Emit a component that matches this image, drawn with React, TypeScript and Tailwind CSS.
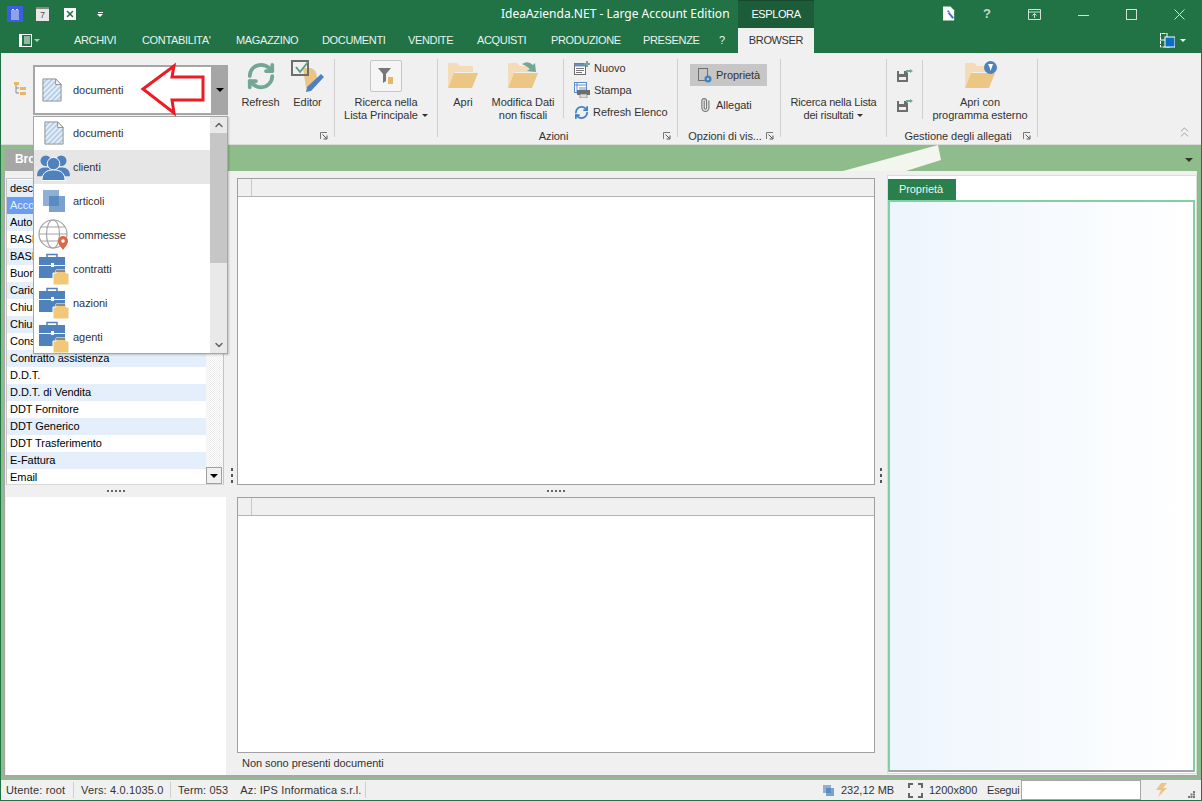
import { ChevronUp, ChevronDown, Paperclip, RefreshCw, X } from 'lucide-react';

const Caret = ({ className = 'border-t-white' }: { className?: string }) => (
  <span className={`inline-block w-0 h-0 border-x-[3px] border-x-transparent border-t-[3px] ${className}`} />
);

const DocIcon = () => (
  <svg width={20} height={24} viewBox="0 0 22 26" preserveAspectRatio="none">
    <defs>
      <pattern id="hatch" width="4" height="4" patternUnits="userSpaceOnUse" patternTransform="rotate(45)">
        <rect width="4" height="4" fill="#e6eef8" />
        <rect width="2" height="4" fill="#b5cde6" />
      </pattern>
    </defs>
    <path d="M1 1h14l6 6v18H1z" fill="url(#hatch)" stroke="#8a8a8a" />
    <path d="M15 1v6h6z" fill="#fff" stroke="#8a8a8a" />
  </svg>
);

const UsersIcon = () => (
  <svg width="33" height="27" viewBox="0 0 34 28" fill="#4f81bd">
    <circle cx="9" cy="7" r="5.500" />
    <circle cx="25" cy="7" r="5.500" />
    <path d="M0 21c1-6 5-7 9-7s8 2 8 7v2H0z" />
    <path d="M17 21c0-5 4-7 8-7s8 1 9 7v2H17z" />
    <circle cx="17" cy="10" r="6.500" stroke="#fff" />
    <path d="M5 27.500c0-8 5-11 12-11s12 3 12 11z" stroke="#fff" />
  </svg>
);

const SquaresIcon = ({ s = 22 }: { s?: number }) => (
  <svg width={s} height={s} viewBox="0 0 22 22">
    <rect x="0" y="0" width="16" height="16" fill="#8fb0d6" />
    <rect x="6" y="6" width="16" height="16" fill="#7ba2cf" />
    <rect x="6" y="6" width="10" height="10" fill="#5b8bc2" />
  </svg>
);

const GlobeIcon = () => (
  <svg width="32" height="32" viewBox="0 0 32 32">
    <g fill="none" stroke="#a3a3a3" strokeWidth="1.2">
      <circle cx="15" cy="15" r="14" />
      <ellipse cx="15" cy="15" rx="6.5" ry="14" />
      <path d="M1 15h28M3 8h24M3 22h24" />
    </g>
    <path d="M25 31c-3-4-5-6-5-9a5 5 0 0 1 10 0c0 3-2 5-5 9z" fill="#d9694a" />
    <circle cx="25" cy="22" r="1.8" fill="#fff" />
  </svg>
);

const CaseIcon = () => (
  <svg width="32" height="32" viewBox="0 0 32 32">
    <path d="M9 4V1.500h10V4" fill="none" stroke="#4f81bd" strokeWidth="1.500" />
    <rect x="1" y="4" width="26" height="8" fill="#4f81bd" />
    <rect x="1" y="13" width="26" height="12" fill="#4f81bd" />
    <rect x="13" y="10" width="3" height="4" fill="#fff" />
    <path d="M15 20h3v-3h10v3h3v12H15z" fill="#f0c878" stroke="#fff" />
    <path d="M18 17h9v2h-9z" fill="#8a8a8a" />
  </svg>
);

const Folder = ({ s = 30 }: { s?: number }) => (
  <svg width={s} height={s * 0.87} viewBox="0 0 30 26">
    <path d="M0 0h9l3 3h13v6H7L0 24z" fill="#f5dcb8" />
    <path d="M6 10h24l-6 15H0z" fill="#ebc684" />
  </svg>
);

const TreeIcon = () => (
  <svg width="12" height="14" viewBox="0 0 12 14">
    <path d="M2 2v9h3M2 6h3" fill="none" stroke="#8a8a8a" />
    <rect x="0" y="0" width="5" height="3" fill="#e9b566" />
    <rect x="6" y="5" width="6" height="3" fill="#e9b566" />
    <rect x="6" y="10" width="6" height="3" fill="#e9b566" />
  </svg>
);

const FloppyIcon = () => (
  <svg width="16" height="13" viewBox="0 0 16 13">
    <path d="M0 2h9l2 2v9H0z" fill="#6e6e6e" />
    <rect x="2" y="2" width="5" height="3" fill="#f0f0f0" />
    <rect x="2" y="8" width="7" height="3" fill="#f0f0f0" />
    <path d="M9 1h4V0l3 2-3 2V3H9z" fill="#6fa893" />
  </svg>
);

const Launcher = () => (
  <svg width="8" height="8" viewBox="0 0 8 8" className="shrink-0">
    <path d="M.5 7V.5H7" fill="none" stroke="#777" />
    <path d="M2.500 2.500l4 4M3.500 7H7V3.500" fill="none" stroke="#555" />
  </svg>
);

const BigBtn = ({ icon, lines, caret, className = '' }: { icon: React.ReactNode; lines: string[]; caret?: boolean; className?: string }) => (
  <div className={`flex flex-col items-center pt-[7px] ${className}`}>
    <div className="h-[32px] flex items-center justify-center">{icon}</div>
    <div className="mt-[4px] leading-[13px] text-center whitespace-nowrap">
      {lines.map((l, i) => (
        <div key={l}>
          {l}
          {caret && i === lines.length - 1 && <Caret className="border-t-[#333] ml-[4px] mb-[2px]" />}
        </div>
      ))}
    </div>
  </div>
);

const Group = ({ className, label, launcher = true, children }: { className: string; label?: string; launcher?: boolean; children: React.ReactNode }) => (
  <>
    <div className={`flex flex-col shrink-0 ${className}`}>
      <div className="flex-1 flex min-h-0">{children}</div>
      <div className="h-[18px] flex items-center justify-end pr-[6px] pt-[2px] gap-[2px]">
        {label && <span className="flex-1 text-center whitespace-nowrap pl-[8px]">{label}</span>}
        {launcher && <Launcher />}
      </div>
    </div>
    <div className="w-px bg-[#cfcfcf] mt-[6px] mb-[7px] shrink-0" />
  </>
);

const TABS: [string, string][] = [
  ['ARCHIVI', 'w-[68px]'],
  ["CONTABILITA'", 'w-[94px]'],
  ['MAGAZZINO', 'w-[86px]'],
  ['DOCUMENTI', 'w-[86px]'],
  ['VENDITE', 'w-[69px]'],
  ['ACQUISTI', 'w-[74px]'],
  ['PRODUZIONE', 'w-[92px]'],
  ['PRESENZE', 'w-[76px]'],
  ['?', 'w-[19px]'],
];

const LIST = ['Auto', 'BASI', 'BASI', 'Buon', 'Caric', 'Chius', 'Chius', 'Cons', 'Contratto assistenza', 'D.D.T.', 'D.D.T. di Vendita', 'DDT Fornitore', 'DDT Generico', 'DDT Trasferimento', 'E-Fattura', 'Email'];

const POPUP: [string, React.ReactNode][] = [
  ['documenti', <DocIcon key="d" />],
  ['clienti', <UsersIcon key="u" />],
  ['articoli', <SquaresIcon key="s" />],
  ['commesse', <GlobeIcon key="g" />],
  ['contratti', <CaseIcon key="c1" />],
  ['nazioni', <CaseIcon key="c2" />],
  ['agenti', <CaseIcon key="c3" />],
];

const GridBox = ({ className }: { className: string }) => (
  <div className={`bg-white border border-[#a0a0a0] ${className}`}>
    <div className="h-[18px] bg-[#f0f0f0] border-b border-[#b4b4b4] flex">
      <div className="w-[14px] border-r border-[#c8c8c8]" />
    </div>
  </div>
);

const HDots = () => (
  <div className="flex gap-[2px]">
    {[0, 1, 2, 3, 4].map((i) => (
      <span key={i} className="w-[2px] h-[2px] bg-[#666]" />
    ))}
  </div>
);

const VDots = () => (
  <div className="flex flex-col gap-[3px]">
    {[0, 1, 2].map((i) => (
      <span key={i} className="w-[2px] h-[3px] bg-[#555]" />
    ))}
  </div>
);

export default function App() {
  return (
    <div className="relative w-[1202px] h-[801px] overflow-hidden bg-[#217346] flex flex-col text-[11px] tracking-[-0.05px] text-[#333] font-['Liberation_Sans',sans-serif]">
      {/* title bar */}
      <div className="h-[28px] flex items-center shrink-0 text-white">
        <div className="w-[501px] flex items-center">
          <div className="ml-[7px] w-[16px] h-[16px] bg-[#3a5fd9] flex items-center justify-center">
            <svg width="10" height="12" viewBox="0 0 10 12" fill="none" stroke="#dfe6fb">
              <path d="M2 12V2q1-2 2 0v10M6 12V2q1-2 2 0v10" />
            </svg>
          </div>
          <div className="ml-[13px] w-[13px] h-[14px] bg-[#e8e8e8] border-t-2 border-[#888] text-[#555] text-[9px] leading-[12px] text-center">7</div>
          <div className="ml-[15px] w-[12px] h-[12px] bg-white flex items-center justify-center">
            <X size={10} strokeWidth={3.5} className="text-[#217346]" />
          </div>
          <div className="ml-[21px] flex flex-col items-center gap-[1px]">
            <span className="w-[5px] h-px bg-white" />
            <Caret />
          </div>
        </div>
        <div className="w-[237px] text-[12px] tracking-normal font-['Noto_Sans',sans-serif] whitespace-nowrap">IdeaAzienda.NET - Large Account Edition</div>
        <div className="w-[76px] h-full bg-[#1c5c39] border-t border-[#154a2d] tracking-[-0.4px] flex items-center justify-center">ESPLORA</div>
        <div className="flex-1 flex items-center text-[#d5dfd9]">
          <div className="ml-[129px] w-[13px] flex justify-center">
            <svg width="14" height="16" viewBox="0 0 14 16">
              <path d="M0 0h8l4 4v11H0z" fill="#fff" />
              <path d="M5 7l5 6 2-1-5-6c0-2-2-2-3-1l2 1v1z" fill="#3a78c2" />
            </svg>
          </div>
          <div className="ml-[25px] w-[12px] text-center text-[13px] font-bold text-[#c9d6cf]">?</div>
          <div className="ml-[35px] w-[13px] flex justify-center">
            <svg width="13" height="11" viewBox="0 0 13 11" fill="none" stroke="#d5dfd9">
              <path d="M.5.5h12v10H.5zM.5 3h12M6.500 9V4.500M4.500 6.500l2-2 2 2" />
            </svg>
          </div>
          <svg width="11" height="11" viewBox="0 0 11 11" className="ml-[37px]" stroke="#d5dfd9">
            <path d="M0 6.500h11" />
          </svg>
          <svg width="11" height="11" viewBox="0 0 11 11" className="ml-[37px]" fill="none" stroke="#d5dfd9">
            <rect x=".5" y=".5" width="10" height="10" />
          </svg>
          <svg width="11" height="11" viewBox="0 0 11 11" className="ml-[37px]" fill="none" stroke="#d5dfd9">
            <path d="M.5.5l10 10M10.500.5l-10 10" />
          </svg>
        </div>
      </div>

      {/* tabs */}
      <div className="h-[25px] flex items-center shrink-0 text-[#eaf2ed] tracking-[-0.35px]">
        <div className="w-[74px] flex items-center pl-[19px] gap-[2px]">
          <svg width="13" height="13" viewBox="0 0 13 13">
            <rect x=".5" y=".5" width="12" height="12" fill="none" stroke="#fff" />
            <path d="M1 0h2v13H1z" fill="#fff" />
            <path d="M5 3h6M5 5h6M5 7h6M5 9h6" stroke="#fff" />
          </svg>
          <Caret className="border-t-[#b5c9bd]" />
        </div>
        <div className="w-[664px] flex whitespace-nowrap">
          {TABS.map(([t, w]) => (
            <span key={t} className={w}>{t}</span>
          ))}
        </div>
        <div className="w-[76px] h-full bg-[#f0f0f0] text-[#333] flex items-center justify-center">BROWSER</div>
        <div className="flex-1 flex items-center justify-end pr-[16px] gap-[5px]">
          <svg width="15" height="15" viewBox="0 0 15 15">
            <path d="M5 .5H.5V14H10v-4" fill="none" stroke="#fff" strokeDasharray="3 1" />
            <rect x="0" y="0" width="7" height="7" fill="none" stroke="#fff" />
            <rect x="5" y="4" width="10" height="10" fill="#0a6fc2" stroke="#fff" />
          </svg>
          <Caret />
        </div>
      </div>

      <div className="mx-px flex-1 flex flex-col min-h-0 bg-[#8fbc8b]">
        {/* ribbon */}
        <div className="relative h-[92px] bg-[#f0f0f0] flex shrink-0 border-b border-[#dcdcdc]">
          <Group className="w-[333px]">
            <div className="w-[32px] pt-[29px] pl-[13px]">
              <TreeIcon />
            </div>
            <div className="relative mt-[12px] w-[195px] h-[50px] z-20 bg-white border-2 border-[#a6a6a6] flex items-center">
              <div className="ml-[7px]"><DocIcon /></div>
              <span className="ml-[11px] text-[#333]">documenti</span>
              <div className="absolute -right-[2px] -top-[2px] -bottom-[2px] w-[17px] bg-[#a6a6a6] flex items-center justify-center">
                <Caret className="border-t-black border-x-[4px] border-t-[4px]" />
              </div>
            </div>
            <BigBtn className="ml-[9px] w-[47px]" icon={<RefreshCw size={30} strokeWidth={3} className="text-[#72a795]" />} lines={['Refresh']} />
            <BigBtn
              className="w-[47px]"
              icon={
                <svg width="33" height="32" viewBox="0 0 33 32">
                  <path d="M12 8h8q6 2 6 10l-8 10h-3z" fill="#ecc484" />
                  <rect x="1" y="1" width="16" height="14" fill="none" stroke="#6e6e6e" strokeWidth="2" />
                  <path d="M5 7l4 5 8-10" fill="none" stroke="#5e9c86" strokeWidth="2" />
                  <path d="M30 14l3 3-13 14-5 1 1-5z" fill="#4f81bd" />
                </svg>
              }
              lines={['Editor']}
            />
          </Group>
          <Group className="w-[102px]" launcher={false}>
            <BigBtn
              className="w-full"
              icon={
                <div className="w-[32px] h-[32px] bg-[#f5f5f5] border border-[#c6c6c6] rounded-[2px] flex items-center justify-center">
                  <svg width="16" height="18" viewBox="0 0 16 18">
                    <path d="M0 1h13L8 7v7L5 16V7z" fill="#777" />
                    <rect x="10" y="10" width="5" height="7" fill="#e9b566" />
                  </svg>
                </div>
              }
              lines={['Ricerca nella', 'Lista Principale']}
              caret
            />
          </Group>
          <Group className="w-[239px]" label="Azioni">
            <BigBtn className="w-[50px]" icon={<Folder />} lines={['Apri']} />
            <BigBtn
              className="w-[70px] mr-[5px]"
              icon={
                <div className="relative">
                  <Folder />
                  <svg width="18" height="14" viewBox="0 0 18 14" className="absolute -right-[2px] -top-[3px]">
                    <path d="M0 4q6-4 11 1l2-2 1 9-9-1 3-2Q5 6 0 4z" fill="#6fa893" />
                  </svg>
                </div>
              }
              lines={['Modifica Dati', 'non fiscali']}
            />
            <div className="w-px bg-[#cfcfcf] mt-[6px] mb-[8px]" />
            <div className="flex flex-col pl-[10px] pt-[7px] gap-[6px]">
              <div className="h-[16px] flex items-center gap-[4px]">
                <svg width="16" height="14" viewBox="0 0 16 14">
                  <rect x=".5" y="2.500" width="11" height="11" fill="#fff" stroke="#6e6e6e" />
                  <path d="M.5 2.500h11v3H.5z" fill="#6e8eb5" />
                  <path d="M2 7.500h8M2 9.500h8M2 11.500h6" stroke="#777" />
                  <path d="M12 0h2v2h2v2h-2v2h-2V4h-2V2h2z" fill="#6fa893" />
                </svg>
                Nuovo
              </div>
              <div className="h-[16px] flex items-center gap-[4px]">
                <svg width="16" height="16" viewBox="0 0 16 16">
                  <rect x=".5" y=".5" width="12" height="10" fill="#fff" stroke="#5b8bc2" />
                  <path d="M.5 3h12M3 .5v10" stroke="#5b8bc2" />
                  <rect x="5" y="5" width="7" height="4" fill="#b9c8da" />
                  <rect x="3" y="8" width="13" height="5" fill="#6e6e6e" />
                  <rect x="6" y="12" width="7" height="4" fill="#dcdcdc" stroke="#6e6e6e" strokeWidth=".6" />
                </svg>
                Stampa
              </div>
              <div className="h-[16px] flex items-center gap-[4px]">
                <RefreshCw size={15} strokeWidth={2.800} className="text-[#3f82c4]" />
                <span>Refresh Elenco</span>
              </div>
            </div>
          </Group>
          <Group className="w-[102px]" label="Opzioni di vis...">
            <div className="flex flex-col pl-[12px] pt-[11px] gap-[8px]">
              <div className="w-[77px] h-[22px] bg-[#c6c6c6] flex items-center pl-[8px] gap-[4px]">
                <svg width="14" height="15" viewBox="0 0 14 15">
                  <rect x=".5" y=".5" width="9" height="12" fill="none" stroke="#6e6e6e" />
                  <circle cx="10" cy="11" r="3.500" fill="#3f82c4" />
                  <circle cx="10" cy="11" r="1.200" fill="#c6c6c6" />
                </svg>
                Proprietà
              </div>
              <div className="h-[22px] flex items-center pl-[8px] gap-[4px]">
                <Paperclip size={14} className="text-[#777] -rotate-45" />
                <span>Allegati</span>
              </div>
            </div>
          </Group>
          <Group className="w-[105px]" launcher={false}>
            <div className="w-full pt-[43px] leading-[13px] text-center whitespace-nowrap tracking-[-0.2px]">
              <div>Ricerca nella Lista</div>
              <div>
                dei risultati
                <Caret className="border-t-[#333] ml-[4px] mb-[2px]" />
              </div>
            </div>
          </Group>
          <Group className="w-[150px]" label="Gestione degli allegati">
            <div className="w-[35px] flex flex-col items-center pt-[16px] gap-[17px] pl-[1px]">
              <FloppyIcon />
              <FloppyIcon />
            </div>
            <div className="w-px bg-[#cfcfcf] mt-[7px] mb-[7px]" />
            <BigBtn
              className="w-[114px]"
              icon={
                <div className="relative">
                  <Folder />
                  <svg width="13" height="13" viewBox="0 0 13 13" className="absolute -right-[2px] -top-[2px]">
                    <circle cx="6.500" cy="6.500" r="6.500" fill="#4f81bd" />
                    <path d="M4 3h5L8 6 6.500 10 5.500 6z" fill="#fff" />
                  </svg>
                </div>
              }
              lines={['Apri con', 'programma esterno']}
            />
          </Group>
          <div className="flex-1 flex items-end justify-end pr-[10px] pb-[3px]">
            <div className="flex flex-col -space-y-[8px] text-[#777]">
              <ChevronUp size={13} strokeWidth={1.200} />
              <ChevronUp size={13} strokeWidth={1.200} />
            </div>
          </div>
        </div>

        {/* browser caption strip */}
        <div className="relative h-[26px] shrink-0 flex items-end pl-[4px]">
          <div className="w-[120px] h-[22px] bg-[#a6a6a6] text-white font-bold text-[12px] pl-[10px] leading-[20px]">Bro</div>
          <svg width="100" height="27" viewBox="0 0 100 27" className="absolute left-[842px] top-0 z-10">
            <path d="M95 0l3 15-35 11H0z" fill="#f3f5ef" />
          </svg>
          <div className="absolute right-[8px] top-[13px] flex">
            <Caret className="border-t-[#333] border-x-[4px] border-t-[4px]" />
          </div>
        </div>

        {/* workspace */}
        <div className="flex-1 min-h-0 mx-[3px] mb-[3px] bg-[#f0f0f0] border-x border-b-2 border-[#a6a6a6] flex pt-[7px]">
          <div className="w-[220px] shrink-0 ml-[1px] flex flex-col">
            <div className="relative h-[307px] mr-[2px] shrink-0 bg-white border border-[#c4c4c4] border-b-[#d8d8d8] pt-[1px] overflow-hidden">
              <div className="h-[17px] w-[199px] bg-[#e4effb] pl-[3px] text-black leading-[17px]">desc</div>
              <div className="h-[17px] w-[199px] bg-[#6b9cf0] pl-[3px] text-[#e8f0ff] leading-[17px]">Acco</div>
              {LIST.map((t, i) => (
                <div key={t + i} className={`h-[17px] w-[199px] pl-[3px] text-black leading-[17px] ${i % 2 === 0 ? 'bg-[#e4effb]' : 'bg-white'}`}>
                  {t}
                </div>
              ))}
              <div className="absolute right-0 top-0 bottom-0 w-[17px] bg-[repeating-conic-gradient(#ececec_0_25%,#ffffff_0_50%)] bg-[length:2px_2px] flex items-end">
                <div className="w-[16px] h-[17px] bg-[#f0f0f0] border border-[#a0a0a0] flex items-center justify-center">
                  <Caret className="border-t-black border-x-[4px] border-t-[4px]" />
                </div>
              </div>
            </div>
            <div className="h-[12px] shrink-0 flex items-center justify-center"><HDots /></div>
            <div className="flex-1 bg-white" />
          </div>
          <div className="w-[11px] shrink-0 flex flex-col pt-[290px] items-center"><VDots /></div>
          <div className="w-[638px] shrink-0 flex flex-col">
            <GridBox className="h-[307px] shrink-0" />
            <div className="h-[12px] shrink-0 flex items-center justify-center"><HDots /></div>
            <GridBox className="flex-1" />
            <div className="h-[22px] shrink-0 flex items-center pl-[5px] pb-[1px]">Non sono presenti documenti</div>
          </div>
          <div className="w-[12px] shrink-0 flex flex-col pt-[290px] items-center"><VDots /></div>
          <div className="flex-1 -mt-[3px] mb-[1px] bg-white border border-[#dcdcdc] flex flex-col pt-[3px] pr-px pb-px">
            <div className="w-[68px] h-[21px] bg-[#2a7f4f] text-[#eef6f1] flex items-center justify-center shrink-0 pr-[2px]">Proprietà</div>
            <div className="flex-1 border-2 border-[#7fd1a0] border-b-[#a6a6a6] bg-gradient-to-r from-[#edf5fd] to-white" />
          </div>
        </div>
      </div>

      {/* status bar */}
      <div className="h-[20px] mx-px mb-px bg-[#f0f0f0] flex items-center shrink-0 whitespace-nowrap tracking-[0.15px]">
        <span className="w-[73px] pl-[5px] border-r border-[#cfcfcf]">Utente: root</span>
        <span className="w-[97px] pl-[7px] border-r border-[#cfcfcf]">Vers: 4.0.1035.0</span>
        <span className="w-[195px] pl-[7px] border-r border-[#cfcfcf]">
          Term: 053<span className="ml-[12px]">Az: IPS Informatica s.r.l.</span>
        </span>
        <div className="ml-[457px]"><SquaresIcon s={11} /></div>
        <span className="ml-[7px] w-[58px] tracking-normal">232,12 MB</span>
        <svg width="15" height="15" viewBox="0 0 15 15" className="ml-[9px]" fill="none" stroke="#666" strokeWidth="2">
          <path d="M1 5V1h4M10 1h4v4M14 10v4h-4M5 14H1v-4" />
        </svg>
        <span className="ml-[6px] w-[58px] tracking-normal">1200x800</span>
        <span className="tracking-[-0.2px]">Esegui</span>
        <div className="ml-[2px] w-[120px] h-[20px] bg-white border border-[#a6a6a6]" />
        <svg width="11" height="14" viewBox="0 0 11 14" className="ml-[15px]">
          <path d="M5 0h6L7 5h4L2 14l3-7H0z" fill="#ecc484" />
        </svg>
        <svg width="7" height="7" viewBox="0 0 7 7" fill="#777" className="ml-[21px] self-end mb-[2px]">
          <rect x="5" y="0" width="2" height="2" />
          <rect x="2.500" y="2.500" width="2" height="2" />
          <rect x="5" y="2.500" width="2" height="2" />
          <rect x="0" y="5" width="2" height="2" />
          <rect x="2.500" y="5" width="2" height="2" />
          <rect x="5" y="5" width="2" height="2" />
        </svg>
      </div>

      {/* combo popup */}
      <div className="absolute left-[33px] top-[116px] w-[195px] h-[238px] z-30 bg-white border border-[#a6a6a6] shadow-[1px_1px_2px_rgba(0,0,0,0.2)] flex">
        <div className="flex-1 -mt-px">
          {POPUP.map(([name, icon], i) => (
            <div key={name} className={`h-[34px] flex items-center ${i === 1 ? 'bg-[#e6e6e6]' : ''}`}>
              <div className="w-[39px] flex justify-center shrink-0">{icon}</div>
              <span>{name}</span>
            </div>
          ))}
        </div>
        <div className="w-[17px] bg-[#e9e9e9] flex flex-col items-center">
          <ChevronUp size={12} strokeWidth={3} className="text-[#666] my-[2px]" />
          <div className="w-full h-[130px] bg-[#c6c6c6]" />
          <div className="flex-1" />
          <ChevronDown size={12} strokeWidth={3} className="text-[#666] my-[2px]" />
        </div>
      </div>

      {/* annotation arrow */}
      <svg width="70" height="56" viewBox="0 0 70 56" className="absolute left-[140px] top-[62px] z-40">
        <path d="M3 27L34 4l-2 11h31v23H32l2 13z" fill="none" stroke="#ed1c24" strokeWidth="3" />
      </svg>
    </div>
  );
}
